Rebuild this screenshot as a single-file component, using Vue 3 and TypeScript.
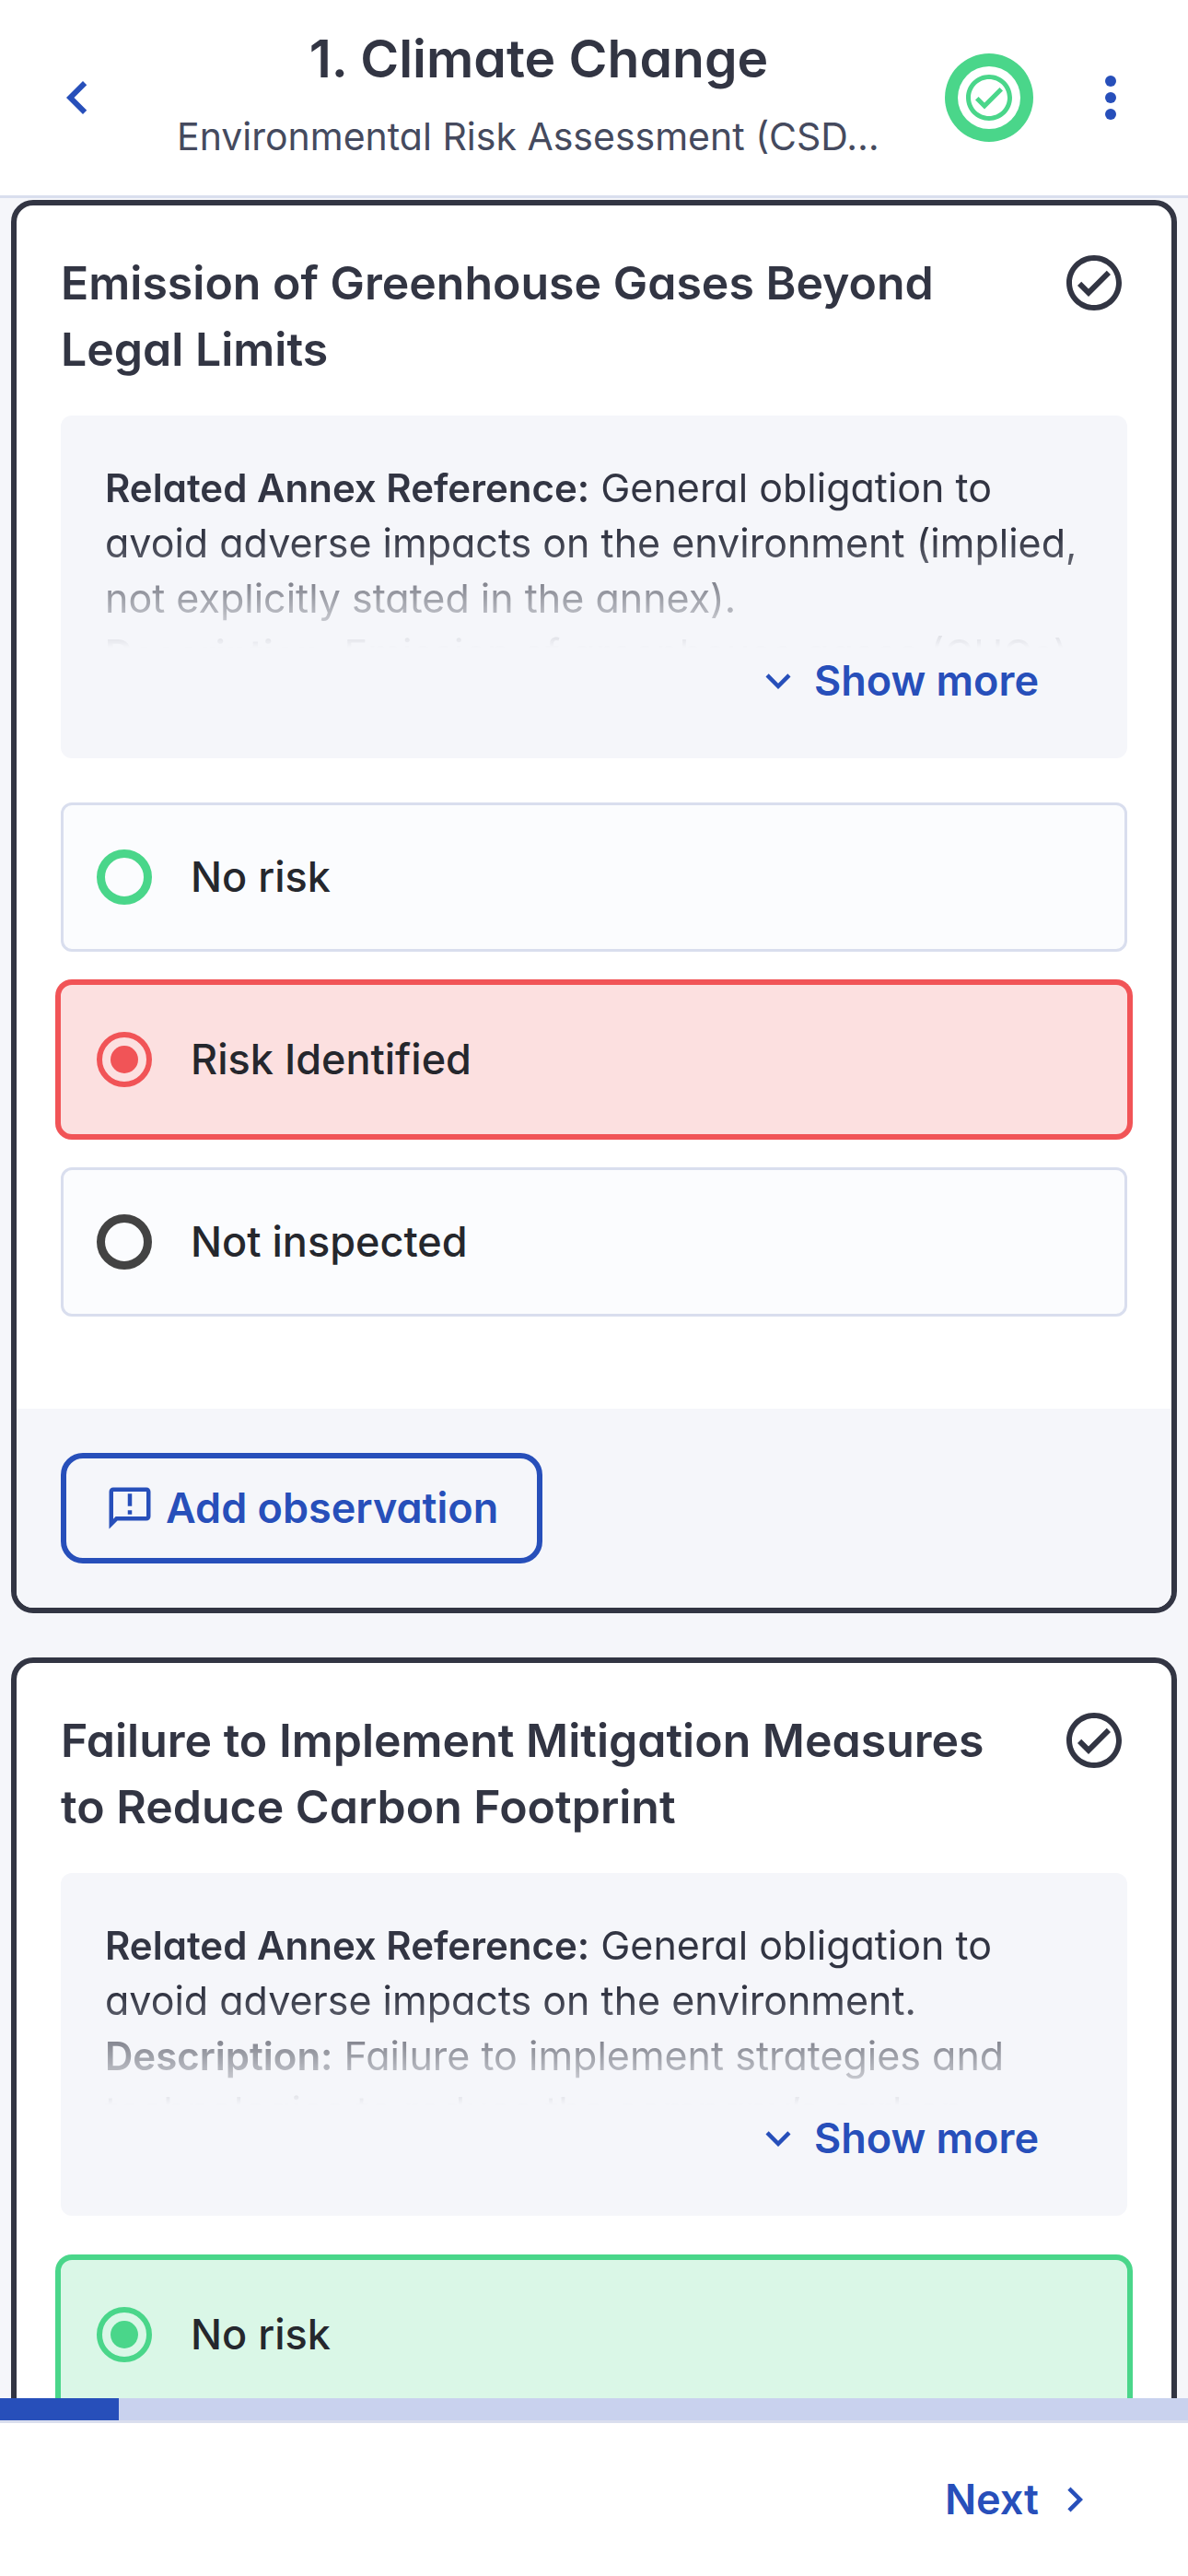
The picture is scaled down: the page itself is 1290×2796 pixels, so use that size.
<script setup lang="ts">
import { ref } from 'vue'

type Answer = 'none' | 'risk' | 'skipped'

interface Passage {
  label?: string
  text: string
}

interface Question {
  id: string
  title: string
  passages: Passage[]
  answer: Answer
}

const options: { value: Answer; label: string }[] = [
  { value: 'none', label: 'No risk' },
  { value: 'risk', label: 'Risk Identified' },
  { value: 'skipped', label: 'Not inspected' },
]

const questions = ref<Question[]>([
  {
    id: 'emission',
    title: 'Emission of Greenhouse Gases Beyond Legal Limits',
    passages: [
      {
        label: 'Related Annex Reference:',
        text: 'General obligation to avoid adverse impacts on the environment (implied, not explicitly stated in the annex).',
      },
      { label: 'Description:', text: 'Emission of greenhouse gases (GHGs)' },
    ],
    answer: 'risk',
  },
  {
    id: 'mitigation',
    title: 'Failure to Implement Mitigation Measures to Reduce Carbon Footprint',
    passages: [
      {
        label: 'Related Annex Reference:',
        text: 'General obligation to avoid adverse impacts on the environment.',
      },
      {
        label: 'Description:',
        text: 'Failure to implement strategies and technologies to reduce the company’s carbon',
      },
    ],
    answer: 'none',
  },
])

const progress = ref(10)
</script>

<template>
  <div class="screen">
    <header class="topbar">
      <button class="icon-button" type="button" aria-label="Back">
        <svg class="icon-lg" viewBox="0 0 24 24"><path d="M15.41 7.41 14 6l-6 6 6 6 1.41-1.41L10.83 12z" /></svg>
      </button>
      <div class="heading">
        <h1>1. Climate Change</h1>
        <p>Environmental Risk Assessment (CSD…</p>
      </div>
      <span class="status">
        <span class="status-inner">
          <svg viewBox="0 0 24 24">
            <path d="M16.59 7.58 10 14.17l-2.59-2.58L6 13l4 4 8-8zM12 2C6.48 2 2 6.48 2 12s4.48 10 10 10 10-4.48 10-10S17.52 2 12 2zm0 18c-4.42 0-8-3.58-8-8s3.58-8 8-8 8 3.58 8 8-3.58 8-8 8z" />
          </svg>
        </span>
      </span>
      <button class="icon-button" type="button" aria-label="More options">
        <svg class="icon-lg" viewBox="0 0 24 24">
          <circle cx="12" cy="6" r="2" /><circle cx="12" cy="12" r="2" /><circle cx="12" cy="18" r="2" />
        </svg>
      </button>
    </header>

    <main class="questions">
      <section v-for="q in questions" :key="q.id" class="card">
        <div class="card-body">
          <div class="card-title">
            <h2>{{ q.title }}</h2>
            <svg class="icon-lg" viewBox="0 0 24 24">
              <path d="M16.59 7.58 10 14.17l-2.59-2.58L6 13l4 4 8-8zM12 2C6.48 2 2 6.48 2 12s4.48 10 10 10 10-4.48 10-10S17.52 2 12 2zm0 18c-4.42 0-8-3.58-8-8s3.58-8 8-8 8 3.58 8 8-3.58 8-8 8z" />
            </svg>
          </div>

          <div class="note">
            <div class="note-text">
              <p v-for="(p, i) in q.passages" :key="i"><strong>{{ p.label }}</strong> {{ p.text }}</p>
            </div>
            <button class="link-button show-more" type="button">
              <svg class="icon-md" viewBox="0 0 24 24"><path d="M16.59 8.59 12 13.17 7.41 8.59 6 10l6 6 6-6z" /></svg>
              <span>Show more</span>
            </button>
          </div>

          <div class="options" role="radiogroup" :aria-label="q.title">
            <label
              v-for="o in options"
              :key="o.value"
              class="option"
              :class="[o.value, { selected: q.answer === o.value }]"
            >
              <input v-model="q.answer" type="radio" :name="q.id" :value="o.value" />
              <span>{{ o.label }}</span>
            </label>
          </div>
        </div>

        <div class="card-footer">
          <button class="outline-button" type="button">
            <svg class="icon-md" viewBox="0 0 24 24">
              <path d="M20 2H4c-1.1 0-1.99.9-1.99 2L2 22l4-4h14c1.1 0 2-.9 2-2V4c0-1.1-.9-2-2-2zm0 14H5.17L4 17.17V4h16v12zM11 5h2v6h-2zm0 8h2v2h-2z" />
            </svg>
            <span>Add observation</span>
          </button>
        </div>
      </section>
    </main>

    <div class="progress" role="progressbar" :aria-valuenow="progress" aria-valuemin="0" aria-valuemax="100">
      <div class="progress-fill" :style="{ width: progress + '%' }"></div>
    </div>
    <footer class="bottombar">
      <button class="link-button" type="button">
        <span>Next</span>
        <svg class="icon-md" viewBox="0 0 24 24"><path d="M10 6 8.59 7.41 13.17 12l-4.58 4.59L10 18l6-6z" /></svg>
      </button>
    </footer>
  </div>
</template>

<style>
body {
  margin: 0;
  background: #f5f6fa;
}
</style>

<style scoped>
.screen {
  --ink: #323543;
  --blue: #274fba;
  --green: #4ad68a;
  --red: #f15457;
  --line: #d9deee;
  --soft: #f5f6fa;
  display: flex;
  flex-direction: column;
  height: 100vh;
  background: var(--soft);
  color: var(--ink);
  font-family: Inter, "Open Sans", sans-serif;
  font-feature-settings: "cv11";
  font-size: 45px;
  line-height: 60px;
}

.screen * {
  box-sizing: border-box;
}

h1,
h2,
p {
  margin: 0;
}

svg {
  display: block;
  flex: none;
  fill: currentColor;
}

button {
  border: 0;
  padding: 0;
  background: none;
  color: var(--blue);
  font: inherit;
  font-feature-settings: inherit;
  font-weight: 600;
  cursor: pointer;
}

.icon-lg {
  width: 72px;
  height: 72px;
}

.icon-md {
  width: 54px;
  height: 54px;
}

.topbar {
  display: flex;
  flex: none;
  align-items: center;
  gap: 48px;
  min-height: 215px;
  padding: 0 48px;
  border-bottom: 3px solid var(--line);
  background: #fff;
}

.heading {
  flex: 1;
  min-width: 0;
  padding: 0 0 12px 24px;
}

.heading h1 {
  margin-bottom: 14px;
  font-size: 57px;
  font-weight: 600;
  line-height: 81px;
  text-align: center;
}

.heading p {
  overflow: hidden;
  color: #454a5e;
  font-size: 41px;
  text-overflow: ellipsis;
  white-space: nowrap;
}

.status {
  display: grid;
  flex: none;
  place-items: center;
  width: 96px;
  height: 96px;
  border-radius: 50%;
  background: var(--green);
}

.status-inner {
  display: grid;
  place-items: center;
  width: 68px;
  height: 68px;
  border-radius: 50%;
  background: #fff;
  color: var(--green);
}

.status-inner svg {
  width: 60px;
  height: 60px;
}

.questions {
  display: flex;
  flex: 1;
  flex-direction: column;
  gap: 48px;
  min-height: 0;
  padding: 2px 12px 48px;
  overflow-y: auto;
  scrollbar-width: none;
}

.card {
  flex: none;
  overflow: hidden;
  border: 6px solid var(--ink);
  border-radius: 24px;
  background: #fff;
}

.card-body {
  padding: 48px 48px 100px;
}

.card-title {
  display: flex;
  align-items: flex-start;
  gap: 36px;
  margin-bottom: 36px;
}

.card-title h2 {
  flex: 1;
  font-size: 50px;
  font-weight: 600;
  line-height: 72px;
}

.note {
  margin-bottom: 48px;
  padding: 48px;
  border-radius: 12px;
  background: var(--soft);
}

.note-text {
  height: 204px;
  overflow: hidden;
  font-size: 43px;
  mask-image: linear-gradient(to top, transparent, #000 120px);
}

.note-text strong {
  font-size: 42px;
  font-weight: 600;
  line-height: 1;
}

.link-button {
  display: flex;
  align-items: center;
  gap: 12px;
  height: 72px;
}

.show-more {
  margin-left: auto;
  padding-right: 48px;
}

.options {
  display: grid;
  gap: 36px;
}

.option {
  display: flex;
  align-items: center;
  gap: 42px;
  height: 162px;
  padding: 0 36px;
  border: 3px solid var(--line);
  border-radius: 12px;
  background: #fbfcfe;
  color: #25272d;
  font-weight: 500;
}

.option.none {
  --tone: var(--green);
  --tint: #daf7e7;
}

.option.risk {
  --tone: var(--red);
  --tint: #fce0e0;
}

.option.skipped {
  --tone: #434343;
  --tint: #ececec;
}

.option.selected {
  border-color: var(--tint);
  background: var(--tint);
  box-shadow: 0 0 0 6px var(--tone);
}

.option input {
  flex: none;
  width: 60px;
  height: 60px;
  margin: 0;
  border: 9px solid var(--tone);
  border-radius: 50%;
  appearance: none;
}

.option input:checked {
  padding: 9px;
  border-width: 6px;
  background: var(--tone) content-box;
}

.card-footer {
  padding: 48px;
  background: var(--soft);
}

.outline-button {
  display: flex;
  align-items: center;
  gap: 12px;
  height: 120px;
  padding: 0 42px;
  border: 6px solid var(--blue);
  border-radius: 24px;
}

.progress {
  flex: none;
  height: 24px;
  background: #c9d2ee;
}

.progress-fill {
  height: 100%;
  background: var(--blue);
}

.bottombar {
  display: flex;
  flex: none;
  align-items: center;
  justify-content: flex-end;
  min-height: 169px;
  padding: 0 96px;
  border-top: 3px solid var(--line);
  background: #fff;
}
</style>
